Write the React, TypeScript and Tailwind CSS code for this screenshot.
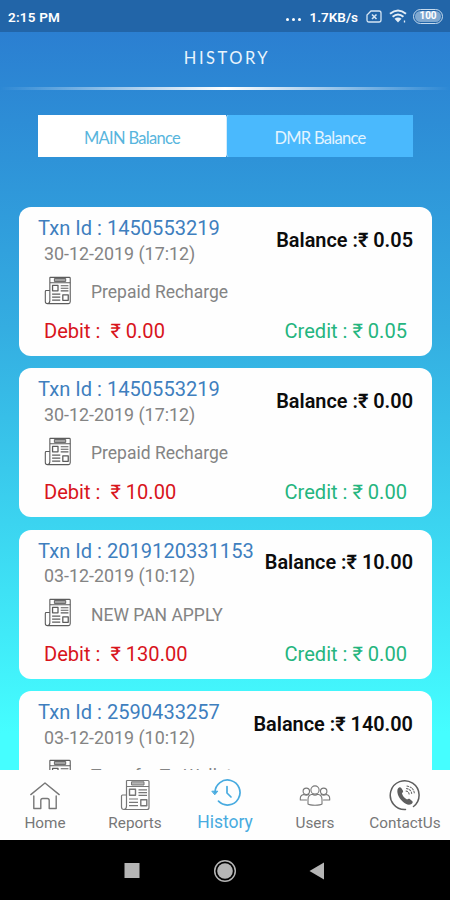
import React from "react";

type Txn = { id: string; date: string; kind: string; debit?: string; credit?: string; balance: string };

const txns: Txn[] = [
  { id: "1450553219", date: "30-12-2019 (17:12)", kind: "Prepaid Recharge", debit: "0.00", credit: "0.05", balance: "0.05" },
  { id: "1450553219", date: "30-12-2019 (17:12)", kind: "Prepaid Recharge", debit: "10.00", credit: "0.00", balance: "0.00" },
  { id: "2019120331153", date: "03-12-2019 (10:12)", kind: "NEW PAN APPLY", debit: "130.00", credit: "0.00", balance: "10.00" },
  { id: "2590433257", date: "03-12-2019 (10:12)", kind: "Transfer To Wallet", balance: "140.00" },
];

function NewsIcon({ className }: { className: string }) {
  return (
    <svg viewBox="0 0 30 32" className={className} fill="none" stroke="currentColor" strokeWidth="1.2" strokeLinejoin="round">
      <path d="M6 1.5h21.5q1 0 1 1v26q0 2-2 2H3.5q-2.5 0-2.5-2.5V17q0-1 1-1h4" />
      <path d="M6 1.5V27q0 3-2.2 3.3M5.5 7.5h23" />
      <rect x="11" y="2.8" width="12.5" height="3.2" fill="currentColor" fillOpacity=".55" strokeWidth="1" />
      <rect x="9" y="10.3" width="6" height="6" strokeWidth="1.4" />
      <path d="M18 10.8h8.5M18 13.6h8.5M18 16.4h8.5M8.5 20h9M8.5 23.3h9M8.5 26.6h9" />
      <rect x="20.3" y="20.8" width="6" height="6" strokeWidth="1.4" />
    </svg>
  );
}

function HomeIcon() {
  return (
    <svg viewBox="0 0 32 32" className="h-8 w-8" fill="none" stroke="currentColor" strokeWidth="1.4" strokeLinejoin="round" strokeLinecap="round">
      <path d="M1.8 15.6 16 4l14.2 11.6M4.8 17v12.5h7V21.5q0-2 2-2h4.400q2 0 2 2v8h7V17" />
    </svg>
  );
}

function HistoryIcon() {
  return (
    <svg viewBox="0 0 32 32" className="h-8 w-8" fill="none" stroke="currentColor" strokeWidth="1.7" strokeLinejoin="round" strokeLinecap="round">
      <path d="M6 14.500A12.500 12.500 0 1 1 9.500 23.200" />
      <path d="M3.200 13.200h5.600L6 16.500z" fill="currentColor" strokeWidth="1" />
      <path d="M18 8.500V15l4 4" />
    </svg>
  );
}

function UsersIcon() {
  return (
    <svg viewBox="0 0 32 32" className="h-8 w-8" fill="none" stroke="currentColor" strokeWidth="1.100" strokeLinejoin="round" strokeLinecap="round">
      <circle cx="16" cy="11" r="4.100" />
      <path d="M9 25v-4.500q0-4.500 4.300-5.200 2.700 1.800 5.400 0 4.300.7 4.300 5.200V25q-1.500 1.200-7 1.200T9 25z" />
      <circle cx="7.300" cy="12.300" r="3.200" />
      <circle cx="24.700" cy="12.300" r="3.200" />
      <path d="M7.500 21H1.300v-1.500q0-3.300 3.400-4 2.600 1.400 5.200 0M24.500 21h6.200v-1.500q0-3.300-3.400-4-2.600 1.400-5.200 0" />
    </svg>
  );
}

function ContactIcon() {
  return (
    <svg viewBox="0 0 32 32" className="h-8 w-8 text-[#5e5e5e]" fill="none" stroke="currentColor" strokeLinecap="round">
      <path d="M16.500 30.500A14.400 14.400 0 1 1 24.500 27.500" strokeWidth="1.500" />
      <g transform="translate(1.500 1.300) scale(.92)">
        <path
          d="M8.300 8.700c1.200-1.500 2.500-1.600 3.400-.2l1.700 2.700c.7 1.200.2 2-1 3 .8 3 2.900 5.400 5.600 6.800 1.200-1 2.200-1.200 3.200-.4l2.300 1.900c1.200 1 .7 2.200-.7 3.200-2.700 1.900-6.300.5-9.900-2.800-4.200-3.900-7-10.700-4.600-14.200z"
          fill="currentColor"
          stroke="none"
        />
        <path d="M16.500 11.700q3.400.3 3.900 4M17 9q5.600.6 6.200 6.300M17.500 6.300q7.800.9 8.500 8.400" strokeWidth="1.100" strokeDasharray="2.500 .8" strokeLinecap="butt" />
      </g>
    </svg>
  );
}

function StatusBar() {
  return (
    <div className="flex h-8 shrink-0 items-center bg-[#2265a8] pr-[7px] pl-2 text-white">
      <span className="pt-px text-[13.500px] leading-8 font-semibold tracking-[0.200px]">2:15 PM</span>
      <div className="ml-auto flex items-center">
        <div className="mt-[7px] mr-[9px] flex gap-[3px]">
          <i className="size-[3px] rounded-full bg-white" />
          <i className="size-[3px] rounded-full bg-white" />
          <i className="size-[3px] rounded-full bg-white" />
        </div>
        <span className="mr-[8px] pt-px text-[13.500px] leading-8 font-semibold">1.7KB/s</span>
        <svg viewBox="0 0 16 13" className="mr-[7px] h-[13px] w-4" fill="none" stroke="#d5e5f3" strokeWidth="1.300">
          <path d="M5 1h8q2 0 2 2v7q0 2-2 2H3q-2 0-2-2V5z" />
          <path d="m6 4.500 4.500 4.500M10.500 4.500 6 9" strokeWidth="1.600" />
        </svg>
        <svg viewBox="0 0 18 14" className="mr-[6px] h-[14px] w-[18px]" fill="none" stroke="#e4eef7" strokeWidth="1.900">
          <path d="M1 4.800q8-6.800 16 0M3.600 7.700q5.400-4.600 10.800 0" />
          <path d="m5.500 9.700 3.500 3.800 3.500-3.800q-3.500-2.600-7 0z" fill="#e4eef7" stroke="none" />
          <path d="M15.500 11.500v2" strokeWidth="1.300" />
        </svg>
        <div className="flex h-[15px] w-[30px] items-center justify-center rounded-full border-[1.500px] border-[#c6daed] p-px">
          <div className="flex h-full w-full items-center justify-center rounded-full bg-[#7fa8d0] text-[10px] leading-none font-bold text-white">100</div>
        </div>
      </div>
    </div>
  );
}

function Card({ t }: { t: Txn }) {
  return (
    <article className="h-[149px] shrink-0 rounded-[12px] bg-[#fefefe] pt-[9px] pr-[19px] pl-[19px]">
      <div className="flex h-[58px] justify-between whitespace-nowrap">
        <div>
          <h2 className="text-[20.100px] leading-6 text-[#3e7fbe]">Txn Id : {t.id}</h2>
          <p className="pt-[0.600px] pl-[6px] text-[17.850px] leading-[26px] text-[#848484]">{t.date}</p>
        </div>
        <p className="pt-[12.600px] text-[19.900px] leading-6 font-semibold text-[#0c0c0c]">Balance :₹ {t.balance}</p>
      </div>
      <div className="flex h-8 items-center pl-[6px]">
        <NewsIcon className="h-[29px] w-[28px] text-[#5c5c5c]" />
        <span className="pt-[4px] pl-[19px] text-[17.500px] leading-7 text-[#848484]">{t.kind}</span>
      </div>
      {t.debit && (
        <div className="mt-[13px] flex justify-between pr-[6px] pl-[6px] text-[20.100px] leading-6">
          <span className="text-[#d8141c]">Debit :&nbsp; ₹ {t.debit}</span>
          <span className="text-[#25b57f]">Credit : ₹ {t.credit}</span>
        </div>
      )}
    </article>
  );
}

const nav = [
  { label: "Home", icon: <HomeIcon /> },
  { label: "Reports", icon: <NewsIcon className="h-8 w-[31px]" /> },
  { label: "History", icon: <HistoryIcon />, active: true },
  { label: "Users", icon: <UsersIcon /> },
  { label: "ContactUs", icon: <ContactIcon /> },
];

export default function App() {
  return (
    <div className="flex h-[900px] w-[450px] flex-col overflow-hidden bg-black font-[Roboto,'Noto_Sans',sans-serif]">
      <StatusBar />
      <main className="flex min-h-0 flex-1 flex-col overflow-hidden bg-linear-to-b from-[#2b7fd1] from-0% via-[#34ade1] via-40% to-[#45feff] to-95%">
        <h1 className="mt-[14px] pl-[4px] text-center font-[Lato,sans-serif] text-[16.500px] leading-6 tracking-[2.500px] text-[#e9f4fc]">HISTORY</h1>
        <div className="mt-[17px] h-[3px] shrink-0 bg-linear-to-r from-transparent via-white to-transparent" />
        <div className="mt-[25px] ml-[38px] flex h-[42px] w-[375px] shrink-0 font-[Lato,sans-serif] text-[16.500px] tracking-[-0.7px]">
          <button className="flex w-[188px] items-center justify-center bg-white pt-[4px] text-[#58b5dd]">MAIN Balance</button>
          <button className="flex flex-1 items-center justify-center rounded-l-[3px] border-l border-[#d4ecfb] bg-[#4ab9fd] pt-[4px] text-[#e2f4ff]">DMR Balance</button>
        </div>
        <div className="mt-[50px] flex min-h-0 flex-1 flex-col gap-[12.330px] overflow-hidden pr-[18px] pl-[19px]">
          {txns.map((t, i) => (
            <Card key={i} t={t} />
          ))}
        </div>
      </main>
      <nav className="grid h-[70px] shrink-0 grid-cols-5 bg-[#fefefe]">
        {nav.map((n) => (
          <div key={n.label} className={n.active ? "flex flex-col items-center pt-[8px] text-[#48abe0]" : "flex flex-col items-center pt-[9px] text-[#777777]"}>
            {n.icon}
            <span className={n.active ? "text-[17.500px] leading-6" : "text-[15.300px] leading-6"}>{n.label}</span>
          </div>
        ))}
      </nav>
      <footer className="flex h-[60px] shrink-0 items-center justify-center bg-black">
        <svg viewBox="0 0 210 30" className="h-[30px] w-[210px]">
          <rect x="4.500" y="8" width="15" height="15" fill="#b5b5b5" />
          <circle cx="105" cy="16" r="10.300" fill="none" stroke="#b5b5b5" strokeWidth="1.500" />
          <circle cx="105" cy="16" r="7.800" fill="#b5b5b5" />
          <path d="M189.500 16 204 7.500v17z" fill="#b5b5b5" />
        </svg>
      </footer>
    </div>
  );
}
